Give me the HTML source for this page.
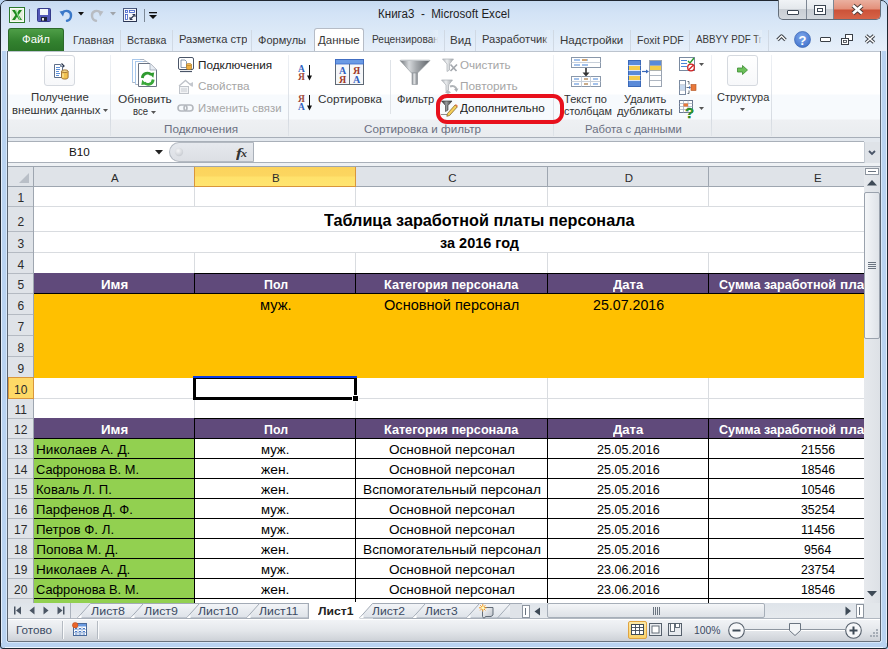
<!DOCTYPE html>
<html><head><meta charset="utf-8"><style>
*{margin:0;padding:0;box-sizing:border-box}
html,body{width:888px;height:649px;overflow:hidden;background:#b9d3f1}
body{position:relative;font-family:"Liberation Sans",sans-serif;font-size:12px;color:#222}
.a{position:absolute}
.t{position:absolute;white-space:pre;line-height:1;transform-origin:0 0}
svg{position:absolute;overflow:visible}
</style></head><body>
<div class="a" style="left:0px;top:0px;width:888px;height:649px;background:#b9d3f1;border-radius:7px 7px 3px 3px;border:1px solid #1f2630"></div>
<div class="a" style="left:1px;top:1px;width:886px;height:50px;background:linear-gradient(#c6daf1 0,#d3e3f6 12px,#dae8f7 27px,#e8f0fa 51px);border-radius:6px 6px 0 0"></div>
<div class="a" style="left:1px;top:51px;width:1px;height:592px;background:#e4eefa"></div>
<div class="a" style="left:6px;top:51px;width:1px;height:591px;background:#d6e7fa"></div>
<div class="a" style="left:881px;top:51px;width:1px;height:591px;background:#d6e7fa"></div>
<div class="a" style="left:5px;top:647px;width:878px;height:1px;background:#eef6fe"></div>
<div class="a" style="left:7px;top:642px;width:874px;height:1px;background:#d6e7fa"></div>
<div class="a" style="left:7px;top:51px;width:1px;height:590px;background:#5a6470"></div>
<div class="a" style="left:880px;top:51px;width:1px;height:590px;background:#5a6470"></div>
<div class="a" style="left:886px;top:51px;width:1px;height:592px;background:#e4eefa"></div>
<svg style="left:9px;top:7px" width="16" height="16" viewBox="0 0 16 16"><rect x="0.5" y="0.5" width="15" height="15" fill="#e6f0dc" stroke="#2c7a2c"/><rect x="1.5" y="1.5" width="13" height="13" fill="none" stroke="#fff" stroke-width="0.8"/><path d="M3 3h3l2 3.3L10 3h3L9.6 8 13 13h-3L8 9.7 6 13H3l3.4-5z" fill="#1f8a1f"/><path d="M6.8 3.2L11 12.8" stroke="#8fe08f" stroke-width="1.2"/></svg>
<div class="a" style="left:29px;top:9px;width:1px;height:13px;background:#7c8896"></div>
<svg style="left:37px;top:8px" width="14" height="14" viewBox="0 0 14 14"><rect x="0.5" y="0.5" width="13" height="13" rx="1" fill="#5358b8" stroke="#343a8a"/><rect x="3" y="1" width="8" height="6" fill="#f4f6fa"/><rect x="4" y="9" width="6" height="4" fill="#20243a"/><rect x="5" y="10" width="2" height="2.5" fill="#e8e8e8"/></svg>
<svg style="left:59px;top:8px" width="14" height="14" viewBox="0 0 14 14"><path d="M3.5 4.5 C7 1.5 12.5 3 12 8 C11.7 11 9.5 12.5 8 12.8" fill="none" stroke="#3a78c8" stroke-width="2.4" stroke-linecap="round"/><path d="M0.5 3.5 L6 2.5 L4 8.5z" fill="#3a78c8"/></svg>
<svg style="left:78px;top:12px" width="6" height="4" viewBox="0 0 6 4"><path d="M0 0h6L3 3.5z" fill="#111"/></svg>
<svg style="left:90px;top:8px" width="14" height="14" viewBox="0 0 14 14"><path d="M10.5 4.5 C7 1.5 1.5 3 2 8 C2.3 11 4.5 12.5 6 12.8" fill="none" stroke="#b8bcc2" stroke-width="2.4" stroke-linecap="round"/><path d="M13.5 3.5 L8 2.5 L10 8.5z" fill="#b8bcc2"/></svg>
<svg style="left:110px;top:12px" width="6" height="4" viewBox="0 0 6 4"><path d="M0 0h6L3 3.5z" fill="#a0a4aa"/></svg>
<svg style="left:123px;top:8px" width="14" height="14" viewBox="0 0 14 14"><rect x="0.5" y="0.5" width="13" height="13" fill="#f4f6fa" stroke="#4a5a80"/><path d="M0.5 13.5h13v-13" fill="none" stroke="#2a3450"/><rect x="2.5" y="2.5" width="2" height="2" fill="#fff" stroke="#3a5ac8" stroke-width="0.8"/><rect x="6.5" y="2.5" width="5" height="2" fill="#fff" stroke="#3a5ac8" stroke-width="0.8"/><rect x="2.5" y="6.5" width="2" height="5" fill="#fff" stroke="#3a5ac8" stroke-width="0.8"/><path d="M7 11.5l4.5-4.5" stroke="#2a3450" stroke-width="1.1"/><path d="M9.5 6.5h2.5v2.5M7 9v2.5h2.5" fill="none" stroke="#2a3450" stroke-width="1"/></svg>
<div class="a" style="left:144px;top:9px;width:1px;height:13px;background:#7c8896"></div>
<svg style="left:149px;top:12px" width="8" height="7" viewBox="0 0 8 7"><rect x="0" y="0" width="8" height="1.3" fill="#111"/><path d="M0 3h8L4 7z" fill="#111"/></svg>
<div class="t" style="left:378.00px;top:8.44px;font-size:12px;font-weight:normal;font-style:normal;color:#1e1e1e;font-family:'Liberation Sans';transform:scaleX(0.9651);">Книга3  -  Microsoft Excel</div>
<div class="a" style="left:778px;top:0;width:103px;height:20px;border:1px solid #646e7a;border-top:none;border-radius:0 0 5px 5px;overflow:hidden;background:linear-gradient(#f0f3f6 0,#e4e8ec 45%,#c9ced4 50%,#d3d8dd 100%)"><div class="a" style="left:27px;top:0;width:1px;height:20px;background:#7d8794"></div><div class="a" style="left:54px;top:0;width:1px;height:20px;background:#7d8794"></div><div class="a" style="left:55px;top:0;width:48px;height:20px;background:linear-gradient(#eab0a0 0,#e3907a 45%,#cc5238 50%,#d8664a 100%)"></div></div>
<div class="a" style="left:787px;top:10px;width:12px;height:5px;background:#fff;border:1px solid #3c4652;border-radius:1px"></div>
<div class="a" style="left:814px;top:5px;width:12px;height:10px;border:1px solid #3c4652;background:#fff;box-shadow:inset 0 0 0 2px #fff, inset 0 0 0 3px #3c4652"></div>
<svg style="left:851px;top:4px" width="13" height="11" viewBox="0 0 13 11"><path d="M2 1.5 L11 9.5 M11 1.5 L2 9.5" stroke="#4a3a36" stroke-width="4.4"/><path d="M2 1.5 L11 9.5 M11 1.5 L2 9.5" stroke="#fff" stroke-width="2.6"/></svg>
<div class="a" style="left:8px;top:28px;width:56px;height:23px;border-radius:3px 3px 0 0;background:linear-gradient(#4e9e47,#33822f 55%,#2b7528);border:1px solid #2d6a2b;border-bottom:none"></div>
<div class="t" style="left:22.00px;top:34.27px;font-size:11.5px;font-weight:normal;font-style:normal;color:#fff;font-family:'Liberation Sans';transform:scaleX(0.9901);">Файл</div>
<div class="a" style="left:314px;top:28px;width:50px;height:24px;border:1px solid #b6bcc6;border-bottom:none;border-radius:3px 3px 0 0;background:linear-gradient(#fff,#fdfeff)"></div>
<div class="t" style="left:72.50px;top:34.67px;font-size:11.5px;font-weight:normal;font-style:normal;color:#383838;font-family:'Liberation Sans';transform:scaleX(0.9365);">Главная</div>
<div class="t" style="left:126.70px;top:34.67px;font-size:11.5px;font-weight:normal;font-style:normal;color:#383838;font-family:'Liberation Sans';transform:scaleX(0.9216);">Вставка</div>
<div class="a" style="left:178.8px;top:30px;width:68.19999999999999px;height:20px;overflow:hidden">
<div class="t" style="left:0.00px;top:4.27px;font-size:11.5px;font-weight:normal;font-style:normal;color:#383838;font-family:'Liberation Sans';transform:scaleX(0.973)">Разметка страницы</div>
</div>
<div class="t" style="left:258.00px;top:34.67px;font-size:11.5px;font-weight:normal;font-style:normal;color:#383838;font-family:'Liberation Sans';transform:scaleX(0.9591);">Формулы</div>
<div class="t" style="left:318.00px;top:34.67px;font-size:11.5px;font-weight:normal;font-style:normal;color:#383838;font-family:'Liberation Sans';">Данные</div>
<div class="a" style="left:372px;top:30px;width:66px;height:20px;overflow:hidden">
<div class="t" style="left:0.00px;top:4.27px;font-size:11.5px;font-weight:normal;font-style:normal;color:#383838;font-family:'Liberation Sans';transform:scaleX(0.88)">Рецензирование</div>
<div class="a" style="left:59px;top:0;width:7px;height:20px;background:linear-gradient(90deg,rgba(228,238,249,0),#e4eef9)"></div>
</div>
<div class="t" style="left:450.00px;top:34.67px;font-size:11.5px;font-weight:normal;font-style:normal;color:#383838;font-family:'Liberation Sans';transform:scaleX(1.0090);">Вид</div>
<div class="a" style="left:482px;top:30px;width:68px;height:20px;overflow:hidden">
<div class="t" style="left:0.00px;top:4.27px;font-size:11.5px;font-weight:normal;font-style:normal;color:#383838;font-family:'Liberation Sans';transform:scaleX(0.97)">Разработчик</div>
<div class="a" style="left:61px;top:0;width:7px;height:20px;background:linear-gradient(90deg,rgba(228,238,249,0),#e4eef9)"></div>
</div>
<div class="t" style="left:560.40px;top:34.67px;font-size:11.5px;font-weight:normal;font-style:normal;color:#383838;font-family:'Liberation Sans';transform:scaleX(1.0030);">Надстройки</div>
<div class="t" style="left:636.60px;top:34.67px;font-size:11.5px;font-weight:normal;font-style:normal;color:#383838;font-family:'Liberation Sans';transform:scaleX(0.9154);">Foxit PDF</div>
<div class="a" style="left:696px;top:30px;width:66px;height:20px;overflow:hidden">
<div class="t" style="left:0.00px;top:4.27px;font-size:11.5px;font-weight:normal;font-style:normal;color:#383838;font-family:'Liberation Sans';transform:scaleX(0.85)">ABBYY PDF Transformer</div>
<div class="a" style="left:59px;top:0;width:7px;height:20px;background:linear-gradient(90deg,rgba(228,238,249,0),#e4eef9)"></div>
</div>
<div class="a" style="left:120px;top:30px;width:1px;height:21px;background:#d0d9e4"></div>
<div class="a" style="left:172px;top:30px;width:1px;height:21px;background:#d0d9e4"></div>
<div class="a" style="left:251px;top:30px;width:1px;height:21px;background:#d0d9e4"></div>
<div class="a" style="left:444px;top:30px;width:1px;height:21px;background:#d0d9e4"></div>
<div class="a" style="left:475px;top:30px;width:1px;height:21px;background:#d0d9e4"></div>
<div class="a" style="left:553px;top:30px;width:1px;height:21px;background:#d0d9e4"></div>
<div class="a" style="left:630px;top:30px;width:1px;height:21px;background:#d0d9e4"></div>
<div class="a" style="left:689px;top:30px;width:1px;height:21px;background:#d0d9e4"></div>
<div class="a" style="left:768px;top:30px;width:1px;height:21px;background:#d0d9e4"></div>
<svg style="left:776px;top:34px" width="11" height="8" viewBox="0 0 11 8"><path d="M1.5 6 L5.5 2 L9.5 6" fill="none" stroke="#3a3f46" stroke-width="3.4" stroke-linejoin="round"/><path d="M1.5 6 L5.5 2 L9.5 6" fill="none" stroke="#fff" stroke-width="1.4" stroke-linejoin="round"/></svg>
<svg style="left:794px;top:31px" width="17" height="17" viewBox="0 0 17 17"><defs><radialGradient id="hg" cx="0.45" cy="0.35" r="0.75"><stop offset="0" stop-color="#7fa8ec"/><stop offset="1" stop-color="#3a6cc8"/></radialGradient></defs><circle cx="8.5" cy="8.5" r="8" fill="url(#hg)" stroke="#3a64b0" stroke-width="0.7"/><text x="8.5" y="13.5" text-anchor="middle" font-family="Liberation Sans" font-weight="bold" font-size="13" fill="#fff">?</text></svg>
<div class="a" style="left:820px;top:37px;width:11px;height:5px;border:1px solid #3a3f46;background:#fff;border-radius:1px"></div>
<svg style="left:841px;top:34px" width="12" height="11" viewBox="0 0 12 11"><rect x="4.5" y="0.5" width="7" height="6" fill="#fff" stroke="#3a3f46" stroke-width="1"/><rect x="5.5" y="1.5" width="5" height="2" fill="none" stroke="#fff"/><rect x="0.5" y="4.5" width="7" height="6" fill="#fff" stroke="#3a3f46" stroke-width="1"/><rect x="2.5" y="6.5" width="3" height="2" fill="none" stroke="#3a3f46" stroke-width="0.8"/></svg>
<svg style="left:864px;top:34px" width="12" height="10" viewBox="0 0 12 10"><path d="M2 1.5 L10 8.5 M10 1.5 L2 8.5" stroke="#3a3f46" stroke-width="3.6"/><path d="M2 1.5 L10 8.5 M10 1.5 L2 8.5" stroke="#fff" stroke-width="1.6"/></svg>
<div class="a" style="left:8px;top:51px;width:872px;height:87px;background:linear-gradient(#fff 0,#fff 42px,#f7fafd 43px,#f7fafd 67px,#eef0f3 68px,#e9ecef 86px);border-top:1px solid #bcc4ce;border-bottom:1px solid #a7aeb8"></div>
<div class="a" style="left:110px;top:55px;width:1px;height:81px;background:linear-gradient(#eef1f5,#d6dbe2 80%,#dfe3e8)"></div>
<div class="a" style="left:288px;top:55px;width:1px;height:81px;background:linear-gradient(#eef1f5,#d6dbe2 80%,#dfe3e8)"></div>
<div class="a" style="left:553px;top:55px;width:1px;height:81px;background:linear-gradient(#eef1f5,#d6dbe2 80%,#dfe3e8)"></div>
<div class="a" style="left:711px;top:55px;width:1px;height:81px;background:linear-gradient(#eef1f5,#d6dbe2 80%,#dfe3e8)"></div>
<div class="a" style="left:771px;top:55px;width:1px;height:81px;background:linear-gradient(#eef1f5,#d6dbe2 80%,#dfe3e8)"></div>
<div class="t" style="left:163.50px;top:123.69px;font-size:11px;font-weight:normal;font-style:normal;color:#6b7082;font-family:'Liberation Sans';transform:scaleX(1.0633);">Подключения</div>
<div class="t" style="left:364.00px;top:123.69px;font-size:11px;font-weight:normal;font-style:normal;color:#6b7082;font-family:'Liberation Sans';transform:scaleX(1.0609);">Сортировка и фильтр</div>
<div class="t" style="left:585.40px;top:123.69px;font-size:11px;font-weight:normal;font-style:normal;color:#6b7082;font-family:'Liberation Sans';transform:scaleX(1.0274);">Работа с данными</div>
<div class="a" style="left:44px;top:55px;width:31px;height:31px;border:1px solid #d5d9df;border-radius:3px;background:linear-gradient(#fff,#f7f8fa)"></div>
<svg style="left:53px;top:63px" width="16" height="17" viewBox="0 0 16 17"><path d="M1.5 1.5h6l2 2v11h-8z" fill="#fff" stroke="#5e6e88"/><path d="M7.5 1.5v2h2" fill="#dfe6f0" stroke="#5e6e88" stroke-width="0.8"/><path d="M8.5 0.5l2.5 2.5-1 1" fill="none" stroke="#26324a" stroke-width="1.2"/><path d="M3 4.5h4M3 6.5h4M3 8.5h3M3 10.5h4M3 12.5h3" stroke="#5b8fd8" stroke-width="1"/><path d="M8.5 8.2v6.3c0 .9 1.5 1.6 3.3 1.6s3.3-.7 3.3-1.6V8.2" fill="#f2c250" stroke="#9a6a2a" stroke-width="0.9"/><ellipse cx="11.8" cy="8.2" rx="3.3" ry="1.3" fill="#f8dc8a" stroke="#9a6a2a" stroke-width="0.9"/><path d="M10 10.5v4" stroke="#fbe9a8" stroke-width="1.2"/></svg>
<div class="t" style="left:30.65px;top:92.27px;font-size:11.5px;font-weight:normal;font-style:normal;color:#333;font-family:'Liberation Sans';transform:scaleX(0.9874);">Получение</div>
<div class="t" style="left:11.70px;top:104.77px;font-size:11.5px;font-weight:normal;font-style:normal;color:#333;font-family:'Liberation Sans';transform:scaleX(0.9852);">внешних данных</div>
<svg style="left:103px;top:109px" width="5" height="3" viewBox="0 0 5 3"><path d="M0 0h5L2.5 3z" fill="#555"/></svg>
<svg style="left:131px;top:58px" width="28" height="30" viewBox="0 0 28 30"><path d="M1.5 1.5H13l3 3V24.5H1.5z" fill="#fff" stroke="#aab4c2"/><path d="M1.5 24V1.5H9" fill="none" stroke="#a8c8ec"/><path d="M4.5 3.5H16l3 3V26.5H4.5z" fill="#fff" stroke="#aab4c2"/><path d="M4.5 26V3.5H12" fill="none" stroke="#a8c8ec"/><path d="M7.5 5.5H19l6.5 6.5V28.5H7.5z" fill="#fff" stroke="#6a7484"/><path d="M19 5.5V12h6.5" fill="#e8edf4" stroke="#9aa4b2" stroke-width="0.8"/><path d="M11.3 20 C11.8 15 17.5 13.5 20.3 17" fill="none" stroke="#2f9a2f" stroke-width="2.8"/><path d="M18 15.3 L23.2 14.6 L22.3 19.8z" fill="#2f9a2f"/><path d="M22.2 21.5 C21.7 26.5 16 28 13.2 24.5" fill="none" stroke="#3aa83a" stroke-width="2.8"/><path d="M15.5 26.2 L10.3 26.9 L11.2 21.7z" fill="#3aa83a"/></svg>
<div class="t" style="left:118.10px;top:93.77px;font-size:11.5px;font-weight:normal;font-style:normal;color:#333;font-family:'Liberation Sans';transform:scaleX(1.0331);">Обновить</div>
<div class="t" style="left:133.00px;top:106.27px;font-size:11.5px;font-weight:normal;font-style:normal;color:#333;font-family:'Liberation Sans';transform:scaleX(0.8269);">все</div>
<svg style="left:151px;top:110.5px" width="5" height="3" viewBox="0 0 5 3"><path d="M0 0h5L2.5 3z" fill="#555"/></svg>
<svg style="left:178px;top:57px" width="17" height="16" viewBox="0 0 17 16"><rect x="0.5" y="0.5" width="15" height="12" rx="1.5" fill="#fff" stroke="#4a5568"/><path d="M2 14.5h12" stroke="#4a5568" stroke-width="1.2"/><path d="M3 3h4l1.5 1.5v6h-5.5z" fill="#fff" stroke="#6a7d99" stroke-width="0.8"/><path d="M8.5 7.5v4c0 .6 1.2 1 2.5 1s2.5-.4 2.5-1v-4" fill="#f0b040" stroke="#b07a20" stroke-width="0.7"/><ellipse cx="11" cy="7.5" rx="2.5" ry="1" fill="#f5c46a" stroke="#b07a20" stroke-width="0.7"/></svg>
<div class="t" style="left:197.50px;top:59.57px;font-size:11.5px;font-weight:normal;font-style:normal;color:#222;font-family:'Liberation Sans';transform:scaleX(1.0183);">Подключения</div>
<svg style="left:178px;top:79px" width="17" height="16" viewBox="0 0 17 16"><path d="M1 7l6.5-5.5L14 7" fill="none" stroke="#c0c4ca" stroke-width="1.4"/><rect x="1.5" y="7.5" width="9" height="7" fill="#f2f3f5" stroke="#c0c4ca"/><path d="M3 10h6M3 12h6" stroke="#c8ccd2"/><path d="M11 5l4-2v5z" fill="#c4c8ce"/></svg>
<div class="t" style="left:197.50px;top:81.37px;font-size:11.5px;font-weight:normal;font-style:normal;color:#a6a6a6;font-family:'Liberation Sans';transform:scaleX(1.0198);">Свойства</div>
<svg style="left:177px;top:102px" width="18" height="12" viewBox="0 0 18 12"><rect x="1" y="3" width="9" height="6" rx="3" fill="none" stroke="#b4b8be" stroke-width="1.6"/><rect x="7" y="3" width="9" height="6" rx="3" fill="none" stroke="#b4b8be" stroke-width="1.6"/></svg>
<div class="t" style="left:197.50px;top:102.97px;font-size:11.5px;font-weight:normal;font-style:normal;color:#a6a6a6;font-family:'Liberation Sans';transform:scaleX(0.9854);">Изменить связи</div>
<svg style="left:297px;top:64px" width="16" height="18" viewBox="0 0 16 18"><text x="4.5" y="8" text-anchor="middle" font-family="Liberation Serif" font-weight="bold" font-size="9.5" fill="#2f5fc0">A</text><text x="4.5" y="16" text-anchor="middle" font-family="Liberation Serif" font-weight="bold" font-size="9.5" fill="#a04a3a">Я</text><path d="M12.5 1v12" stroke="#111" stroke-width="1"/><path d="M10 11.5l2.5 5 2.5-5z" fill="#111"/></svg>
<svg style="left:297px;top:94px" width="16" height="18" viewBox="0 0 16 18"><text x="4.5" y="8" text-anchor="middle" font-family="Liberation Serif" font-weight="bold" font-size="9.5" fill="#a04a3a">Я</text><text x="4.5" y="16" text-anchor="middle" font-family="Liberation Serif" font-weight="bold" font-size="9.5" fill="#2f5fc0">A</text><path d="M12.5 1v12" stroke="#111" stroke-width="1"/><path d="M10 11.5l2.5 5 2.5-5z" fill="#111"/></svg>
<svg style="left:335px;top:59px" width="30" height="26" viewBox="0 0 30 26"><rect x="0.5" y="0.5" width="28" height="25" fill="#f6f7f9" stroke="#5e6874"/><rect x="0.5" y="0.5" width="28" height="4.5" fill="#6a9ae4" stroke="#3a6ac8" stroke-width="0.8"/><path d="M14.5 5v20.5" stroke="#5e6874"/><text x="7.5" y="14.5" text-anchor="middle" font-family="Liberation Serif" font-weight="bold" font-size="10" fill="#2f5fc0">A</text><text x="7.5" y="23.5" text-anchor="middle" font-family="Liberation Serif" font-weight="bold" font-size="10" fill="#a03a2a">Я</text><text x="21.5" y="14.5" text-anchor="middle" font-family="Liberation Serif" font-weight="bold" font-size="10" fill="#a03a2a">Я</text><text x="21.5" y="23.5" text-anchor="middle" font-family="Liberation Serif" font-weight="bold" font-size="10" fill="#2f5fc0">A</text></svg>
<div class="t" style="left:318.30px;top:93.77px;font-size:11.5px;font-weight:normal;font-style:normal;color:#333;font-family:'Liberation Sans';transform:scaleX(1.0139);">Сортировка</div>
<div class="a" style="left:390px;top:60px;width:1px;height:54px;background:#dfe3e8"></div>
<svg style="left:399px;top:59px" width="32" height="27" viewBox="0 0 32 27"><defs><linearGradient id="fg" x1="0" x2="1"><stop offset="0" stop-color="#6e7378"/><stop offset="0.3" stop-color="#d6d9dc"/><stop offset="0.55" stop-color="#a4a8ac"/><stop offset="1" stop-color="#5e6368"/></linearGradient><linearGradient id="fg2" x1="0" x2="1"><stop offset="0" stop-color="#8a8f94"/><stop offset="0.4" stop-color="#e4e6e8"/><stop offset="1" stop-color="#7a7f84"/></linearGradient></defs><path d="M1 1.5h30L18.5 14h-6z" fill="url(#fg)" stroke="#8a9096" stroke-width="0.6"/><rect x="13" y="14" width="5.5" height="11.5" fill="url(#fg2)" stroke="#8a9096" stroke-width="0.6"/><path d="M1.5 1.2h29" stroke="#c8ccd0" stroke-width="1.2"/></svg>
<div class="t" style="left:397.00px;top:93.77px;font-size:11.5px;font-weight:normal;font-style:normal;color:#333;font-family:'Liberation Sans';transform:scaleX(0.9627);">Фильтр</div>
<svg style="left:442px;top:58px" width="16" height="14" viewBox="0 0 16 14"><defs><linearGradient id="dg" x1="0" x2="1"><stop offset="0" stop-color="#b4b8bc"/><stop offset="0.4" stop-color="#eceef0"/><stop offset="1" stop-color="#a0a4a8"/></linearGradient></defs><path d="M0.5 1h11L7.5 6v6l-2.5 1.5V6z" fill="url(#dg)" stroke="#a8acb2" stroke-width="0.7"/><path d="M8.5 6.5l6 6.5M15 6.5L8.5 13" stroke="#a4a8ae" stroke-width="1.7"/></svg>
<div class="t" style="left:460.00px;top:59.77px;font-size:11.5px;font-weight:normal;font-style:normal;color:#a6a6a6;font-family:'Liberation Sans';transform:scaleX(1.0107);">Очистить</div>
<svg style="left:441px;top:79px" width="18" height="15" viewBox="0 0 18 15"><path d="M0.5 1h11L7.5 6v5l-2.5 1.5V6z" fill="url(#dg)" stroke="#a8acb2" stroke-width="0.7"/><path d="M9 7.5c3-1.5 6 0 6.5 3" fill="none" stroke="#b0b4b8" stroke-width="2"/><path d="M17.5 9.5l-2 3.5-2.5-3z" fill="#a8acb2"/><path d="M4 13.5l3-2.5 3 2.5-3 1.5z" fill="#b4b8bc"/></svg>
<div class="t" style="left:460.00px;top:81.27px;font-size:11.5px;font-weight:normal;font-style:normal;color:#a6a6a6;font-family:'Liberation Sans';transform:scaleX(1.0296);">Повторить</div>
<svg style="left:441px;top:100px" width="17" height="17" viewBox="0 0 17 17"><defs><linearGradient id="fg3" x1="0" x2="1"><stop offset="0" stop-color="#222"/><stop offset="0.45" stop-color="#9a9ea2"/><stop offset="1" stop-color="#333"/></linearGradient></defs><path d="M0.5 1h10.5L7 5.5V10l-2.5 1.5V5.5z" fill="url(#fg3)" stroke="#333" stroke-width="0.6"/><path d="M6.5 13.5L14 5l2.2 2-7.6 8.5-2.8.8z" fill="#f4cf5a" stroke="#7a5a20" stroke-width="0.7"/><path d="M14 5l2.2 2 .8-.9-2.2-2z" fill="#e87a4a"/><path d="M0.5 14.5h1M2.5 14.5h1M4.5 14.5h1" stroke="#222" stroke-width="1"/></svg>
<div class="t" style="left:460.00px;top:102.97px;font-size:11.5px;font-weight:normal;font-style:normal;color:#222;font-family:'Liberation Sans';transform:scaleX(1.0244);">Дополнительно</div>
<svg style="left:570px;top:57px" width="32" height="30" viewBox="0 0 32 30"><rect x="1.5" y="0.5" width="29" height="10" fill="#fff" stroke="#8a98aa"/><path d="M1.5 5.5h29" stroke="#c8d0da"/><path d="M4 3h6M12 3h6M4 8h6M12 8h6" stroke="#4a86d8" stroke-width="1.2"/><path d="M12 3h5" stroke="#f0962a" stroke-width="1.2"/><path d="M16 11v6" stroke="#333" stroke-width="1.6"/><path d="M12.5 15.5l3.5 4 3.5-4z" fill="#333"/><rect x="1.5" y="19.5" width="29" height="10" fill="#fff" stroke="#8a98aa"/><path d="M11.5 19.5v10M20.5 19.5v10M1.5 24.5h29" stroke="#c8d0da"/><path d="M4 22h5M14 22h4M23 22h5M4 27h5M14 27h4M23 27h5" stroke="#4a86d8" stroke-width="1.2"/><path d="M14 22h4M14 27h4" stroke="#f0962a" stroke-width="1.2"/></svg>
<div class="t" style="left:564.40px;top:93.77px;font-size:11.5px;font-weight:normal;font-style:normal;color:#333;font-family:'Liberation Sans';transform:scaleX(0.9602);">Текст по</div>
<div class="t" style="left:563.50px;top:106.27px;font-size:11.5px;font-weight:normal;font-style:normal;color:#333;font-family:'Liberation Sans';transform:scaleX(0.9372);">столбцам</div>
<svg style="left:628px;top:60px" width="34" height="27" viewBox="0 0 34 27"><rect x="0.5" y="0.5" width="12" height="26" fill="#5a8ad8" stroke="#3a68b8"/><path d="M0.5 5.5h12M0.5 10.5h12M0.5 15.5h12M0.5 20.5h12" stroke="#fff" stroke-width="0.8"/><rect x="1" y="6" width="11" height="4" fill="#f4cc4a"/><rect x="1" y="16" width="11" height="4" fill="#f4cc4a"/><path d="M14 11.5h5" stroke="#3a68b8" stroke-width="1.2"/><path d="M18 9.5l3 2-3 2z" fill="#3a68b8"/><rect x="21.5" y="0.5" width="12" height="26" fill="#fff" stroke="#9aa4b2"/><rect x="22" y="1" width="11" height="4.5" fill="#5a8ad8"/><rect x="22" y="6" width="11" height="4.5" fill="#f4cc4a"/><path d="M21.5 5.5h12M21.5 10.5h12M21.5 15.5h12M21.5 20.5h12" stroke="#9aa4b2" stroke-width="0.8"/></svg>
<div class="t" style="left:623.80px;top:93.77px;font-size:11.5px;font-weight:normal;font-style:normal;color:#333;font-family:'Liberation Sans';transform:scaleX(0.9611);">Удалить</div>
<div class="t" style="left:617.00px;top:106.27px;font-size:11.5px;font-weight:normal;font-style:normal;color:#333;font-family:'Liberation Sans';transform:scaleX(0.9795);">дубликаты</div>
<svg style="left:679px;top:57px" width="17" height="15" viewBox="0 0 17 15"><rect x="0.5" y="0.5" width="15" height="13" fill="#fff" stroke="#7a8aa0"/><path d="M2 3.5h6M2 6.5h6M2 9.5h6" stroke="#4a86d8" stroke-width="1.1"/><path d="M9 4l2 2 4-5" fill="none" stroke="#2a9a2a" stroke-width="1.4"/><circle cx="12" cy="10.5" r="3.3" fill="#fff" stroke="#d02020" stroke-width="1.3"/><path d="M10 12.5l4-4" stroke="#d02020" stroke-width="1.2"/></svg>
<svg style="left:699px;top:63px" width="5" height="3" viewBox="0 0 5 3"><path d="M0 0h5L2.5 3z" fill="#555"/></svg>
<svg style="left:679px;top:80px" width="17" height="15" viewBox="0 0 17 15"><rect x="0.5" y="0.5" width="6" height="14" fill="#fff" stroke="#7a8aa0"/><path d="M0.5 5h6M0.5 10h6" stroke="#9aaac0"/><rect x="1" y="5.5" width="5" height="4" fill="#c8daf0"/><path d="M8.5 1.5h1.5v3M8.5 13.5h1.5v-3M7.5 7.5h3" stroke="#56606c" stroke-width="0.9" fill="none"/><path d="M10 6l2 1.5-2 1.5z" fill="#3a6ab8"/><rect x="12" y="4.5" width="5" height="6" fill="#e8783a" stroke="#b05020" stroke-width="0.6"/></svg>
<svg style="left:679px;top:100px" width="17" height="18" viewBox="0 0 17 18"><rect x="0.5" y="0.5" width="13" height="12" fill="#fff" stroke="#6a7890"/><path d="M0.5 3.5h13M0.5 6.5h13M0.5 9.5h13M4.5 0.5v12M9 0.5v12" stroke="#a8b4c4" stroke-width="0.8"/><rect x="4.5" y="3.5" width="4.5" height="3" fill="#e8783a"/><text x="6" y="17.5" font-family="Liberation Sans" font-weight="bold" font-size="15" fill="#2a9a2a" stroke="#1a6a1a" stroke-width="0.3">?</text></svg>
<svg style="left:699px;top:107px" width="5" height="3" viewBox="0 0 5 3"><path d="M0 0h5L2.5 3z" fill="#555"/></svg>
<div class="a" style="left:727px;top:55px;width:31px;height:31px;border:1px solid #d5d9df;border-radius:3px;background:linear-gradient(#fff,#f7f8fa)"></div>
<svg style="left:737px;top:65px" width="11" height="10" viewBox="0 0 11 10"><path d="M0.5 3h5V0.5l5 4.5-5 4.5V7h-5z" fill="#6cc05a" stroke="#3a8a30" stroke-width="0.8"/></svg>
<div class="t" style="left:716.50px;top:91.77px;font-size:11.5px;font-weight:normal;font-style:normal;color:#333;font-family:'Liberation Sans';transform:scaleX(0.9604);">Структура</div>
<svg style="left:740px;top:108px" width="5" height="3" viewBox="0 0 5 3"><path d="M0 0h5L2.5 3z" fill="#555"/></svg>
<div class="a" style="left:435.5px;top:94px;width:128.5px;height:29.7px;border:4.6px solid #e8101c;border-radius:11px"></div>
<div class="a" style="left:8px;top:138px;width:872px;height:28px;background:#e3e8ee"></div>
<div class="a" style="left:8px;top:141px;width:856px;height:22px;background:#fff;border-top:1px solid #a9b0b9;border-bottom:1px solid #a9b0b9"></div>
<div class="a" style="left:8px;top:163px;width:872px;height:3px;background:#eef1f4"></div>
<div class="a" style="left:8px;top:166px;width:872px;height:1px;background:#9da5af"></div>
<div class="t" style="left:68.50px;top:147.27px;font-size:11.5px;font-weight:normal;font-style:normal;color:#111;font-family:'Liberation Sans';transform:scaleX(1.0162);">B10</div>
<svg style="left:155px;top:150px" width="8" height="5" viewBox="0 0 8 5"><path d="M0 0h8L4 4.5z" fill="#222"/></svg>
<div class="a" style="left:169px;top:142px;width:85px;height:20px;background:linear-gradient(#e6e9ee,#dcdfe4);border:1px solid #b4bac2;border-right:1px solid #a9b0b9;border-radius:10px 0 0 10px"></div>
<svg style="left:173px;top:145px" width="13" height="13" viewBox="0 0 13 13"><defs><radialGradient id="cg" cx="0.4" cy="0.35" r="0.7"><stop offset="0" stop-color="#f4f5f7"/><stop offset="1" stop-color="#c6cad0"/></radialGradient></defs><circle cx="6" cy="7" r="4.2" fill="url(#cg)"/></svg>
<div class="t" style="left:235.50px;top:146.92px;font-size:12.5px;font-weight:bold;font-style:italic;color:#333;font-family:'Liberation Serif';transform:scaleX(1.4382);">f</div>
<div class="t" style="left:240.80px;top:149.96px;font-size:9.5px;font-weight:bold;font-style:italic;color:#333;font-family:'Liberation Serif';transform:scaleX(1.2632);">x</div>
<div class="a" style="left:864px;top:142px;width:16px;height:21px;background:#dfe3e8;border-left:1px solid #c5cbd3"></div>
<svg style="left:868px;top:150px" width="8" height="6" viewBox="0 0 8 6"><path d="M1 1l3 3 3-3" fill="none" stroke="#4a5568" stroke-width="1.8"/></svg>
<div class="a" style="left:8px;top:167px;width:856px;height:436px;overflow:hidden;background:#fff">
<div class="a" style="left:0px;top:0px;width:856px;height:19px;background:#dfe3e8"></div>
<div class="a" style="left:0px;top:19px;width:856px;height:1px;background:#9ea6b0"></div>
<div class="a" style="left:0px;top:20px;width:25px;height:420px;background:#dfe3e8"></div>
<div class="a" style="left:25px;top:0px;width:1px;height:440px;background:#9ea6b0"></div>
<svg style="left:11px;top:6px" width="10" height="10" viewBox="0 0 10 10"><path d="M10 0V10H0z" fill="#b9bfc7"/></svg>
<div class="a" style="left:26px;top:39px;width:830px;height:1px;background:#d9dce0"></div>
<div class="a" style="left:0px;top:39px;width:25px;height:1px;background:#b4bac2"></div>
<div class="a" style="left:26px;top:64px;width:830px;height:1px;background:#d9dce0"></div>
<div class="a" style="left:0px;top:64px;width:25px;height:1px;background:#b4bac2"></div>
<div class="a" style="left:26px;top:85px;width:830px;height:1px;background:#d9dce0"></div>
<div class="a" style="left:0px;top:85px;width:25px;height:1px;background:#b4bac2"></div>
<div class="a" style="left:26px;top:106px;width:830px;height:1px;background:#d9dce0"></div>
<div class="a" style="left:0px;top:106px;width:25px;height:1px;background:#b4bac2"></div>
<div class="a" style="left:26px;top:126px;width:830px;height:1px;background:#d9dce0"></div>
<div class="a" style="left:0px;top:126px;width:25px;height:1px;background:#b4bac2"></div>
<div class="a" style="left:26px;top:147px;width:830px;height:1px;background:#d9dce0"></div>
<div class="a" style="left:0px;top:147px;width:25px;height:1px;background:#b4bac2"></div>
<div class="a" style="left:26px;top:168px;width:830px;height:1px;background:#d9dce0"></div>
<div class="a" style="left:0px;top:168px;width:25px;height:1px;background:#b4bac2"></div>
<div class="a" style="left:26px;top:189px;width:830px;height:1px;background:#d9dce0"></div>
<div class="a" style="left:0px;top:189px;width:25px;height:1px;background:#b4bac2"></div>
<div class="a" style="left:26px;top:210px;width:830px;height:1px;background:#d9dce0"></div>
<div class="a" style="left:0px;top:210px;width:25px;height:1px;background:#b4bac2"></div>
<div class="a" style="left:26px;top:231px;width:830px;height:1px;background:#d9dce0"></div>
<div class="a" style="left:0px;top:231px;width:25px;height:1px;background:#b4bac2"></div>
<div class="a" style="left:26px;top:251px;width:830px;height:1px;background:#d9dce0"></div>
<div class="a" style="left:0px;top:251px;width:25px;height:1px;background:#b4bac2"></div>
<div class="a" style="left:26px;top:271px;width:830px;height:1px;background:#d9dce0"></div>
<div class="a" style="left:0px;top:271px;width:25px;height:1px;background:#b4bac2"></div>
<div class="a" style="left:26px;top:291px;width:830px;height:1px;background:#d9dce0"></div>
<div class="a" style="left:0px;top:291px;width:25px;height:1px;background:#b4bac2"></div>
<div class="a" style="left:26px;top:311px;width:830px;height:1px;background:#d9dce0"></div>
<div class="a" style="left:0px;top:311px;width:25px;height:1px;background:#b4bac2"></div>
<div class="a" style="left:26px;top:331px;width:830px;height:1px;background:#d9dce0"></div>
<div class="a" style="left:0px;top:331px;width:25px;height:1px;background:#b4bac2"></div>
<div class="a" style="left:26px;top:351px;width:830px;height:1px;background:#d9dce0"></div>
<div class="a" style="left:0px;top:351px;width:25px;height:1px;background:#b4bac2"></div>
<div class="a" style="left:26px;top:371px;width:830px;height:1px;background:#d9dce0"></div>
<div class="a" style="left:0px;top:371px;width:25px;height:1px;background:#b4bac2"></div>
<div class="a" style="left:26px;top:391px;width:830px;height:1px;background:#d9dce0"></div>
<div class="a" style="left:0px;top:391px;width:25px;height:1px;background:#b4bac2"></div>
<div class="a" style="left:26px;top:411px;width:830px;height:1px;background:#d9dce0"></div>
<div class="a" style="left:0px;top:411px;width:25px;height:1px;background:#b4bac2"></div>
<div class="a" style="left:26px;top:431px;width:830px;height:1px;background:#d9dce0"></div>
<div class="a" style="left:0px;top:431px;width:25px;height:1px;background:#b4bac2"></div>
<div class="a" style="left:0px;top:452px;width:25px;height:1px;background:#b4bac2"></div>
<div class="a" style="left:186px;top:20px;width:1px;height:420px;background:#d9dce0"></div>
<div class="a" style="left:186px;top:0px;width:1px;height:19px;background:#9ea6b0"></div>
<div class="a" style="left:347px;top:20px;width:1px;height:420px;background:#d9dce0"></div>
<div class="a" style="left:347px;top:0px;width:1px;height:19px;background:#9ea6b0"></div>
<div class="a" style="left:539px;top:20px;width:1px;height:420px;background:#d9dce0"></div>
<div class="a" style="left:539px;top:0px;width:1px;height:19px;background:#9ea6b0"></div>
<div class="a" style="left:700px;top:20px;width:1px;height:420px;background:#d9dce0"></div>
<div class="a" style="left:700px;top:0px;width:1px;height:19px;background:#9ea6b0"></div>
<div class="a" style="left:186px;top:-1px;width:162px;height:21px;background:linear-gradient(#fcd35c 0,#fcd660 45%,#ffe26c 55%,#ffe570);border:1px solid #d9963b"></div>
<div class="t" style="left:102.96px;top:5.87px;font-size:11.5px;font-weight:normal;font-style:normal;color:#2b2b2b;font-family:'Liberation Sans';">A</div>
<div class="t" style="left:263.96px;top:5.87px;font-size:11.5px;font-weight:normal;font-style:normal;color:#2b2b2b;font-family:'Liberation Sans';">B</div>
<div class="t" style="left:440.14px;top:5.87px;font-size:11.5px;font-weight:normal;font-style:normal;color:#2b2b2b;font-family:'Liberation Sans';">C</div>
<div class="t" style="left:616.64px;top:5.87px;font-size:11.5px;font-weight:normal;font-style:normal;color:#2b2b2b;font-family:'Liberation Sans';">D</div>
<div class="t" style="left:805.96px;top:5.87px;font-size:11.5px;font-weight:normal;font-style:normal;color:#2b2b2b;font-family:'Liberation Sans';">E</div>
<div class="t" style="left:9.46px;top:24.84px;font-size:12px;font-weight:normal;font-style:normal;color:#2b2b2b;font-family:'Liberation Sans';">1</div>
<div class="t" style="left:9.46px;top:48.64px;font-size:12px;font-weight:normal;font-style:normal;color:#2b2b2b;font-family:'Liberation Sans';">2</div>
<div class="t" style="left:9.46px;top:70.84px;font-size:12px;font-weight:normal;font-style:normal;color:#2b2b2b;font-family:'Liberation Sans';">3</div>
<div class="t" style="left:9.46px;top:91.84px;font-size:12px;font-weight:normal;font-style:normal;color:#2b2b2b;font-family:'Liberation Sans';">4</div>
<div class="t" style="left:9.46px;top:111.84px;font-size:12px;font-weight:normal;font-style:normal;color:#2b2b2b;font-family:'Liberation Sans';">5</div>
<div class="t" style="left:9.46px;top:132.84px;font-size:12px;font-weight:normal;font-style:normal;color:#2b2b2b;font-family:'Liberation Sans';">6</div>
<div class="t" style="left:9.46px;top:153.84px;font-size:12px;font-weight:normal;font-style:normal;color:#2b2b2b;font-family:'Liberation Sans';">7</div>
<div class="t" style="left:9.46px;top:174.84px;font-size:12px;font-weight:normal;font-style:normal;color:#2b2b2b;font-family:'Liberation Sans';">8</div>
<div class="t" style="left:9.46px;top:195.84px;font-size:12px;font-weight:normal;font-style:normal;color:#2b2b2b;font-family:'Liberation Sans';">9</div>
<div class="a" style="left:0px;top:210px;width:26px;height:22px;background:#fed966;border:1px solid #d9963b"></div>
<div class="t" style="left:6.12px;top:216.84px;font-size:12px;font-weight:normal;font-style:normal;color:#2b2b2b;font-family:'Liberation Sans';">10</div>
<div class="t" style="left:6.57px;top:236.84px;font-size:12px;font-weight:normal;font-style:normal;color:#2b2b2b;font-family:'Liberation Sans';">11</div>
<div class="t" style="left:6.12px;top:256.84px;font-size:12px;font-weight:normal;font-style:normal;color:#2b2b2b;font-family:'Liberation Sans';">12</div>
<div class="t" style="left:6.12px;top:276.84px;font-size:12px;font-weight:normal;font-style:normal;color:#2b2b2b;font-family:'Liberation Sans';">13</div>
<div class="t" style="left:6.12px;top:296.84px;font-size:12px;font-weight:normal;font-style:normal;color:#2b2b2b;font-family:'Liberation Sans';">14</div>
<div class="t" style="left:6.12px;top:316.84px;font-size:12px;font-weight:normal;font-style:normal;color:#2b2b2b;font-family:'Liberation Sans';">15</div>
<div class="t" style="left:6.12px;top:336.84px;font-size:12px;font-weight:normal;font-style:normal;color:#2b2b2b;font-family:'Liberation Sans';">16</div>
<div class="t" style="left:6.12px;top:356.84px;font-size:12px;font-weight:normal;font-style:normal;color:#2b2b2b;font-family:'Liberation Sans';">17</div>
<div class="t" style="left:6.12px;top:376.84px;font-size:12px;font-weight:normal;font-style:normal;color:#2b2b2b;font-family:'Liberation Sans';">18</div>
<div class="t" style="left:6.12px;top:396.84px;font-size:12px;font-weight:normal;font-style:normal;color:#2b2b2b;font-family:'Liberation Sans';">19</div>
<div class="t" style="left:6.12px;top:416.84px;font-size:12px;font-weight:normal;font-style:normal;color:#2b2b2b;font-family:'Liberation Sans';">20</div>
<div class="a" style="left:26px;top:40px;width:830px;height:24px;background:#fff"></div>
<div class="a" style="left:26px;top:65px;width:830px;height:20px;background:#fff"></div>
<div class="t" style="left:316.25px;top:45.41px;font-size:17px;font-weight:bold;font-style:normal;color:#000;font-family:'Liberation Sans';transform:scaleX(0.9532);">Таблица заработной платы персонала</div>
<div class="t" style="left:432.00px;top:69.15px;font-size:14px;font-weight:bold;font-style:normal;color:#000;font-family:'Liberation Sans';transform:scaleX(1.0342);">за 2016 год</div>
<div class="a" style="left:26px;top:106px;width:830px;height:20px;background:#604a7b"></div>
<div class="a" style="left:26px;top:126px;width:830px;height:1px;background:#000"></div>
<div class="a" style="left:186px;top:106px;width:670px;height:1px;background:#000"></div>
<div class="a" style="left:186px;top:106px;width:1px;height:21px;background:#000"></div>
<div class="a" style="left:347px;top:106px;width:1px;height:21px;background:#000"></div>
<div class="a" style="left:539px;top:106px;width:1px;height:21px;background:#000"></div>
<div class="a" style="left:700px;top:106px;width:1px;height:21px;background:#000"></div>
<div class="t" style="left:92.60px;top:111.00px;font-size:13px;font-weight:bold;font-style:normal;color:#fff;font-family:'Liberation Sans';transform:scaleX(1.0246);">Имя</div>
<div class="t" style="left:255.60px;top:111.00px;font-size:13px;font-weight:bold;font-style:normal;color:#fff;font-family:'Liberation Sans';transform:scaleX(0.9511);">Пол</div>
<div class="t" style="left:376.30px;top:111.00px;font-size:13px;font-weight:bold;font-style:normal;color:#fff;font-family:'Liberation Sans';transform:scaleX(0.9739);">Категория персонала</div>
<div class="t" style="left:605.05px;top:111.00px;font-size:13px;font-weight:bold;font-style:normal;color:#fff;font-family:'Liberation Sans';transform:scaleX(1.0069);">Дата</div>
<div class="t" style="left:710.60px;top:111.00px;font-size:13px;font-weight:bold;font-style:normal;color:#fff;font-family:'Liberation Sans';transform:scaleX(0.9682);">Сумма заработной</div>
<div class="t" style="left:831.80px;top:111.00px;font-size:13px;font-weight:bold;font-style:normal;color:#fff;font-family:'Liberation Sans';transform:scaleX(1.0413);">платы</div>
<div class="a" style="left:26px;top:127px;width:830px;height:84px;background:#ffc000"></div>
<div class="t" style="left:251.85px;top:130.73px;font-size:14.5px;font-weight:normal;font-style:normal;color:#000;font-family:'Liberation Sans';transform:scaleX(1.0134);">муж.</div>
<div class="t" style="left:375.75px;top:130.73px;font-size:14.5px;font-weight:normal;font-style:normal;color:#000;font-family:'Liberation Sans';transform:scaleX(1.0059);">Основной персонал</div>
<div class="t" style="left:584.65px;top:130.73px;font-size:14.5px;font-weight:normal;font-style:normal;color:#000;font-family:'Liberation Sans';transform:scaleX(0.9796);">25.07.2016</div>
<div class="a" style="left:26px;top:251px;width:830px;height:20px;background:#604a7b"></div>
<div class="a" style="left:26px;top:271px;width:830px;height:1px;background:#000"></div>
<div class="a" style="left:186px;top:251px;width:670px;height:1px;background:#000"></div>
<div class="a" style="left:186px;top:251px;width:1px;height:21px;background:#000"></div>
<div class="a" style="left:347px;top:251px;width:1px;height:21px;background:#000"></div>
<div class="a" style="left:539px;top:251px;width:1px;height:21px;background:#000"></div>
<div class="a" style="left:700px;top:251px;width:1px;height:21px;background:#000"></div>
<div class="t" style="left:92.60px;top:256.00px;font-size:13px;font-weight:bold;font-style:normal;color:#fff;font-family:'Liberation Sans';transform:scaleX(1.0246);">Имя</div>
<div class="t" style="left:255.60px;top:256.00px;font-size:13px;font-weight:bold;font-style:normal;color:#fff;font-family:'Liberation Sans';transform:scaleX(0.9511);">Пол</div>
<div class="t" style="left:376.30px;top:256.00px;font-size:13px;font-weight:bold;font-style:normal;color:#fff;font-family:'Liberation Sans';transform:scaleX(0.9739);">Категория персонала</div>
<div class="t" style="left:605.05px;top:256.00px;font-size:13px;font-weight:bold;font-style:normal;color:#fff;font-family:'Liberation Sans';transform:scaleX(1.0069);">Дата</div>
<div class="t" style="left:710.60px;top:256.00px;font-size:13px;font-weight:bold;font-style:normal;color:#fff;font-family:'Liberation Sans';transform:scaleX(0.9682);">Сумма заработной</div>
<div class="t" style="left:831.80px;top:256.00px;font-size:13px;font-weight:bold;font-style:normal;color:#fff;font-family:'Liberation Sans';transform:scaleX(1.0413);">платы</div>
<div class="a" style="left:26px;top:272px;width:160px;height:20px;background:#92d050"></div>
<div class="a" style="left:26px;top:291px;width:830px;height:1px;background:#000"></div>
<div class="a" style="left:186px;top:271px;width:1px;height:21px;background:#000"></div>
<div class="a" style="left:347px;top:271px;width:1px;height:21px;background:#000"></div>
<div class="a" style="left:539px;top:271px;width:1px;height:21px;background:#000"></div>
<div class="a" style="left:700px;top:271px;width:1px;height:21px;background:#000"></div>
<div class="t" style="left:28.20px;top:275.57px;font-size:13.5px;font-weight:normal;font-style:normal;color:#000;font-family:'Liberation Sans';transform:scaleX(1.0066);">Николаев А. Д.</div>
<div class="t" style="left:253.35px;top:275.57px;font-size:13.5px;font-weight:normal;font-style:normal;color:#000;font-family:'Liberation Sans';transform:scaleX(0.9717);">муж.</div>
<div class="t" style="left:380.50px;top:275.57px;font-size:13.5px;font-weight:normal;font-style:normal;color:#000;font-family:'Liberation Sans';transform:scaleX(1.0062);">Основной персонал</div>
<div class="t" style="left:588.85px;top:275.57px;font-size:13.5px;font-weight:normal;font-style:normal;color:#000;font-family:'Liberation Sans';transform:scaleX(0.9278);">25.05.2016</div>
<div class="t" style="left:792.50px;top:275.57px;font-size:13.5px;font-weight:normal;font-style:normal;color:#000;font-family:'Liberation Sans';transform:scaleX(0.9055);">21556</div>
<div class="a" style="left:26px;top:292px;width:160px;height:20px;background:#92d050"></div>
<div class="a" style="left:26px;top:311px;width:830px;height:1px;background:#000"></div>
<div class="a" style="left:186px;top:291px;width:1px;height:21px;background:#000"></div>
<div class="a" style="left:347px;top:291px;width:1px;height:21px;background:#000"></div>
<div class="a" style="left:539px;top:291px;width:1px;height:21px;background:#000"></div>
<div class="a" style="left:700px;top:291px;width:1px;height:21px;background:#000"></div>
<div class="t" style="left:28.20px;top:295.57px;font-size:13.5px;font-weight:normal;font-style:normal;color:#000;font-family:'Liberation Sans';transform:scaleX(0.9512);">Сафронова В. М.</div>
<div class="t" style="left:253.30px;top:295.57px;font-size:13.5px;font-weight:normal;font-style:normal;color:#000;font-family:'Liberation Sans';transform:scaleX(1.0234);">жен.</div>
<div class="t" style="left:380.50px;top:295.57px;font-size:13.5px;font-weight:normal;font-style:normal;color:#000;font-family:'Liberation Sans';transform:scaleX(1.0062);">Основной персонал</div>
<div class="t" style="left:588.85px;top:295.57px;font-size:13.5px;font-weight:normal;font-style:normal;color:#000;font-family:'Liberation Sans';transform:scaleX(0.9278);">25.05.2016</div>
<div class="t" style="left:792.50px;top:295.57px;font-size:13.5px;font-weight:normal;font-style:normal;color:#000;font-family:'Liberation Sans';transform:scaleX(0.9055);">18546</div>
<div class="a" style="left:26px;top:312px;width:160px;height:20px;background:#92d050"></div>
<div class="a" style="left:26px;top:331px;width:830px;height:1px;background:#000"></div>
<div class="a" style="left:186px;top:311px;width:1px;height:21px;background:#000"></div>
<div class="a" style="left:347px;top:311px;width:1px;height:21px;background:#000"></div>
<div class="a" style="left:539px;top:311px;width:1px;height:21px;background:#000"></div>
<div class="a" style="left:700px;top:311px;width:1px;height:21px;background:#000"></div>
<div class="t" style="left:28.20px;top:315.57px;font-size:13.5px;font-weight:normal;font-style:normal;color:#000;font-family:'Liberation Sans';transform:scaleX(0.9682);">Коваль Л. П.</div>
<div class="t" style="left:253.30px;top:315.57px;font-size:13.5px;font-weight:normal;font-style:normal;color:#000;font-family:'Liberation Sans';transform:scaleX(1.0234);">жен.</div>
<div class="t" style="left:354.50px;top:315.57px;font-size:13.5px;font-weight:normal;font-style:normal;color:#000;font-family:'Liberation Sans';transform:scaleX(1.0158);">Вспомогательный персонал</div>
<div class="t" style="left:588.85px;top:315.57px;font-size:13.5px;font-weight:normal;font-style:normal;color:#000;font-family:'Liberation Sans';transform:scaleX(0.9278);">25.05.2016</div>
<div class="t" style="left:792.50px;top:315.57px;font-size:13.5px;font-weight:normal;font-style:normal;color:#000;font-family:'Liberation Sans';transform:scaleX(0.9055);">10546</div>
<div class="a" style="left:26px;top:332px;width:160px;height:20px;background:#92d050"></div>
<div class="a" style="left:26px;top:351px;width:830px;height:1px;background:#000"></div>
<div class="a" style="left:186px;top:331px;width:1px;height:21px;background:#000"></div>
<div class="a" style="left:347px;top:331px;width:1px;height:21px;background:#000"></div>
<div class="a" style="left:539px;top:331px;width:1px;height:21px;background:#000"></div>
<div class="a" style="left:700px;top:331px;width:1px;height:21px;background:#000"></div>
<div class="t" style="left:28.20px;top:335.57px;font-size:13.5px;font-weight:normal;font-style:normal;color:#000;font-family:'Liberation Sans';transform:scaleX(0.9691);">Парфенов Д. Ф.</div>
<div class="t" style="left:253.35px;top:335.57px;font-size:13.5px;font-weight:normal;font-style:normal;color:#000;font-family:'Liberation Sans';transform:scaleX(0.9717);">муж.</div>
<div class="t" style="left:380.50px;top:335.57px;font-size:13.5px;font-weight:normal;font-style:normal;color:#000;font-family:'Liberation Sans';transform:scaleX(1.0062);">Основной персонал</div>
<div class="t" style="left:588.85px;top:335.57px;font-size:13.5px;font-weight:normal;font-style:normal;color:#000;font-family:'Liberation Sans';transform:scaleX(0.9278);">25.05.2016</div>
<div class="t" style="left:792.50px;top:335.57px;font-size:13.5px;font-weight:normal;font-style:normal;color:#000;font-family:'Liberation Sans';transform:scaleX(0.9055);">35254</div>
<div class="a" style="left:26px;top:352px;width:160px;height:20px;background:#92d050"></div>
<div class="a" style="left:26px;top:371px;width:830px;height:1px;background:#000"></div>
<div class="a" style="left:186px;top:351px;width:1px;height:21px;background:#000"></div>
<div class="a" style="left:347px;top:351px;width:1px;height:21px;background:#000"></div>
<div class="a" style="left:539px;top:351px;width:1px;height:21px;background:#000"></div>
<div class="a" style="left:700px;top:351px;width:1px;height:21px;background:#000"></div>
<div class="t" style="left:28.20px;top:355.57px;font-size:13.5px;font-weight:normal;font-style:normal;color:#000;font-family:'Liberation Sans';transform:scaleX(0.9853);">Петров Ф. Л.</div>
<div class="t" style="left:253.35px;top:355.57px;font-size:13.5px;font-weight:normal;font-style:normal;color:#000;font-family:'Liberation Sans';transform:scaleX(0.9717);">муж.</div>
<div class="t" style="left:380.50px;top:355.57px;font-size:13.5px;font-weight:normal;font-style:normal;color:#000;font-family:'Liberation Sans';transform:scaleX(1.0062);">Основной персонал</div>
<div class="t" style="left:588.85px;top:355.57px;font-size:13.5px;font-weight:normal;font-style:normal;color:#000;font-family:'Liberation Sans';transform:scaleX(0.9278);">25.05.2016</div>
<div class="t" style="left:792.50px;top:355.57px;font-size:13.5px;font-weight:normal;font-style:normal;color:#000;font-family:'Liberation Sans';transform:scaleX(0.9303);">11456</div>
<div class="a" style="left:26px;top:372px;width:160px;height:20px;background:#92d050"></div>
<div class="a" style="left:26px;top:391px;width:830px;height:1px;background:#000"></div>
<div class="a" style="left:186px;top:371px;width:1px;height:21px;background:#000"></div>
<div class="a" style="left:347px;top:371px;width:1px;height:21px;background:#000"></div>
<div class="a" style="left:539px;top:371px;width:1px;height:21px;background:#000"></div>
<div class="a" style="left:700px;top:371px;width:1px;height:21px;background:#000"></div>
<div class="t" style="left:28.20px;top:375.57px;font-size:13.5px;font-weight:normal;font-style:normal;color:#000;font-family:'Liberation Sans';">Попова М. Д.</div>
<div class="t" style="left:253.30px;top:375.57px;font-size:13.5px;font-weight:normal;font-style:normal;color:#000;font-family:'Liberation Sans';transform:scaleX(1.0234);">жен.</div>
<div class="t" style="left:354.50px;top:375.57px;font-size:13.5px;font-weight:normal;font-style:normal;color:#000;font-family:'Liberation Sans';transform:scaleX(1.0158);">Вспомогательный персонал</div>
<div class="t" style="left:588.85px;top:375.57px;font-size:13.5px;font-weight:normal;font-style:normal;color:#000;font-family:'Liberation Sans';transform:scaleX(0.9278);">25.05.2016</div>
<div class="t" style="left:795.90px;top:375.57px;font-size:13.5px;font-weight:normal;font-style:normal;color:#000;font-family:'Liberation Sans';transform:scaleX(0.9053);">9564</div>
<div class="a" style="left:26px;top:392px;width:160px;height:20px;background:#92d050"></div>
<div class="a" style="left:26px;top:411px;width:830px;height:1px;background:#000"></div>
<div class="a" style="left:186px;top:391px;width:1px;height:21px;background:#000"></div>
<div class="a" style="left:347px;top:391px;width:1px;height:21px;background:#000"></div>
<div class="a" style="left:539px;top:391px;width:1px;height:21px;background:#000"></div>
<div class="a" style="left:700px;top:391px;width:1px;height:21px;background:#000"></div>
<div class="t" style="left:28.20px;top:395.57px;font-size:13.5px;font-weight:normal;font-style:normal;color:#000;font-family:'Liberation Sans';transform:scaleX(1.0066);">Николаев А. Д.</div>
<div class="t" style="left:253.35px;top:395.57px;font-size:13.5px;font-weight:normal;font-style:normal;color:#000;font-family:'Liberation Sans';transform:scaleX(0.9717);">муж.</div>
<div class="t" style="left:380.50px;top:395.57px;font-size:13.5px;font-weight:normal;font-style:normal;color:#000;font-family:'Liberation Sans';transform:scaleX(1.0062);">Основной персонал</div>
<div class="t" style="left:588.85px;top:395.57px;font-size:13.5px;font-weight:normal;font-style:normal;color:#000;font-family:'Liberation Sans';transform:scaleX(0.9278);">23.06.2016</div>
<div class="t" style="left:792.50px;top:395.57px;font-size:13.5px;font-weight:normal;font-style:normal;color:#000;font-family:'Liberation Sans';transform:scaleX(0.9055);">23754</div>
<div class="a" style="left:26px;top:412px;width:160px;height:20px;background:#92d050"></div>
<div class="a" style="left:26px;top:431px;width:830px;height:1px;background:#000"></div>
<div class="a" style="left:186px;top:411px;width:1px;height:21px;background:#000"></div>
<div class="a" style="left:347px;top:411px;width:1px;height:21px;background:#000"></div>
<div class="a" style="left:539px;top:411px;width:1px;height:21px;background:#000"></div>
<div class="a" style="left:700px;top:411px;width:1px;height:21px;background:#000"></div>
<div class="t" style="left:28.20px;top:415.57px;font-size:13.5px;font-weight:normal;font-style:normal;color:#000;font-family:'Liberation Sans';transform:scaleX(0.9512);">Сафронова В. М.</div>
<div class="t" style="left:253.30px;top:415.57px;font-size:13.5px;font-weight:normal;font-style:normal;color:#000;font-family:'Liberation Sans';transform:scaleX(1.0234);">жен.</div>
<div class="t" style="left:380.50px;top:415.57px;font-size:13.5px;font-weight:normal;font-style:normal;color:#000;font-family:'Liberation Sans';transform:scaleX(1.0062);">Основной персонал</div>
<div class="t" style="left:588.85px;top:415.57px;font-size:13.5px;font-weight:normal;font-style:normal;color:#000;font-family:'Liberation Sans';transform:scaleX(0.9278);">23.06.2016</div>
<div class="t" style="left:792.50px;top:415.57px;font-size:13.5px;font-weight:normal;font-style:normal;color:#000;font-family:'Liberation Sans';transform:scaleX(0.9055);">18546</div>
<div class="a" style="left:26px;top:432px;width:160px;height:10px;background:#92d050"></div>
<div class="a" style="left:186px;top:431px;width:1px;height:10px;background:#000"></div>
<div class="a" style="left:347px;top:431px;width:1px;height:10px;background:#000"></div>
<div class="a" style="left:539px;top:431px;width:1px;height:10px;background:#000"></div>
<div class="a" style="left:700px;top:431px;width:1px;height:10px;background:#000"></div>
<div class="a" style="left:185px;top:209px;width:3px;height:24px;background:#000"></div>
<div class="a" style="left:185px;top:209px;width:164px;height:2px;background:#0a3be6"></div>
<div class="a" style="left:185px;top:211px;width:164px;height:1px;background:#000"></div>
<div class="a" style="left:346px;top:209px;width:3px;height:19px;background:#000"></div>
<div class="a" style="left:346px;top:209px;width:3px;height:2px;background:#0a3be6"></div>
<div class="a" style="left:185px;top:230px;width:159px;height:3px;background:#000"></div>
<div class="a" style="left:344px;top:228px;width:7px;height:7px;background:#000;border:1px solid #fff"></div>
</div>
<div class="a" style="left:864px;top:167px;width:16px;height:436px;background:linear-gradient(90deg,#e6e9ed,#dde1e6)"></div>
<div class="a" style="left:865px;top:168px;width:14px;height:7px;background:#fff;border:1px solid #8e96a0"></div>
<div class="a" style="left:868px;top:171px;width:8px;height:1px;background:#6a7480"></div>
<svg style="left:867px;top:180px" width="10" height="6" viewBox="0 0 10 6"><path d="M0 5.5h10L5 0z" fill="#3e4a56"/></svg>
<div class="a" style="left:864px;top:192px;width:16px;height:147px;border:1px solid #9aa2ad;border-radius:2px;background:linear-gradient(90deg,#f4f6f8,#e9ecf0 50%,#dfe3e8)"></div>
<div class="a" style="left:868px;top:262px;width:8px;height:1px;background:#6a7480"></div>
<div class="a" style="left:868px;top:264px;width:8px;height:1px;background:#6a7480"></div>
<div class="a" style="left:868px;top:266px;width:8px;height:1px;background:#6a7480"></div>
<div class="a" style="left:868px;top:268px;width:8px;height:1px;background:#6a7480"></div>
<svg style="left:867px;top:591px" width="10" height="6" viewBox="0 0 10 6"><path d="M0 0h10L5 5.5z" fill="#3e4a56"/></svg>
<div class="a" style="left:8px;top:603px;width:872px;height:16px;background:linear-gradient(#dfe4ea,#e7eaee)"></div>
<div class="a" style="left:8px;top:618px;width:872px;height:1px;background:#b1b8c1"></div>
<svg style="left:14px;top:606px" width="8" height="9" viewBox="0 0 8 9"><rect x="0" y="0.5" width="1.5" height="8" fill="#4a5563"/><path d="M7 0.5v8L2 4.5z" fill="#4a5563"/></svg>
<svg style="left:29px;top:606px" width="6" height="9" viewBox="0 0 6 9"><path d="M5.5 0.5v8L0.5 4.5z" fill="#4a5563"/></svg>
<svg style="left:43px;top:606px" width="6" height="9" viewBox="0 0 6 9"><path d="M0.5 0.5v8l5-4z" fill="#4a5563"/></svg>
<svg style="left:57px;top:606px" width="8" height="9" viewBox="0 0 8 9"><path d="M0.5 0.5v8l5-4z" fill="#4a5563"/><rect x="6" y="0.5" width="1.5" height="8" fill="#4a5563"/></svg>
<div class="a" style="left:70px;top:603px;width:1px;height:16px;background:#aab2bc"></div>
<svg style="left:77.4px;top:603px" width="67.8" height="16" viewBox="0 0 67.8 16"><defs><linearGradient id="tg" x1="0" y1="0" x2="0" y2="1"><stop offset="0" stop-color="#f3f5f8"/><stop offset="1" stop-color="#dde2e8"/></linearGradient></defs><path d="M0.5 15 L13.5 0.5 H67.3 V15z" fill="url(#tg)" stroke="#a3abb6" stroke-width="1"/><path d="M0.5 15l4-3.5v3.5z" fill="#fff"/></svg>
<svg style="left:130.2px;top:603px" width="70.3" height="16" viewBox="0 0 70.3 16"><defs><linearGradient id="tg" x1="0" y1="0" x2="0" y2="1"><stop offset="0" stop-color="#f3f5f8"/><stop offset="1" stop-color="#dde2e8"/></linearGradient></defs><path d="M0.5 15 L13.5 0.5 H69.8 V15z" fill="url(#tg)" stroke="#a3abb6" stroke-width="1"/><path d="M0.5 15l4-3.5v3.5z" fill="#fff"/></svg>
<svg style="left:185.5px;top:603px" width="75.7" height="16" viewBox="0 0 75.7 16"><defs><linearGradient id="tg" x1="0" y1="0" x2="0" y2="1"><stop offset="0" stop-color="#f3f5f8"/><stop offset="1" stop-color="#dde2e8"/></linearGradient></defs><path d="M0.5 15 L13.5 0.5 H75.2 V15z" fill="url(#tg)" stroke="#a3abb6" stroke-width="1"/><path d="M0.5 15l4-3.5v3.5z" fill="#fff"/></svg>
<svg style="left:246.2px;top:603px" width="62.8" height="16" viewBox="0 0 62.8 16"><defs><linearGradient id="tg" x1="0" y1="0" x2="0" y2="1"><stop offset="0" stop-color="#f3f5f8"/><stop offset="1" stop-color="#dde2e8"/></linearGradient></defs><path d="M0.5 15 L13.5 0.5 H62.3 V15z" fill="url(#tg)" stroke="#a3abb6" stroke-width="1"/><path d="M0.5 15l4-3.5v3.5z" fill="#fff"/></svg>
<div class="t" style="left:91.00px;top:605.57px;font-size:11.5px;font-weight:normal;font-style:normal;color:#3b4a63;font-family:'Liberation Sans';transform:scaleX(1.0831);">Лист8</div>
<div class="t" style="left:144.00px;top:605.57px;font-size:11.5px;font-weight:normal;font-style:normal;color:#3b4a63;font-family:'Liberation Sans';transform:scaleX(1.0831);">Лист9</div>
<div class="t" style="left:198.00px;top:605.57px;font-size:11.5px;font-weight:normal;font-style:normal;color:#3b4a63;font-family:'Liberation Sans';transform:scaleX(1.0667);">Лист10</div>
<div class="t" style="left:259.00px;top:605.57px;font-size:11.5px;font-weight:normal;font-style:normal;color:#3b4a63;font-family:'Liberation Sans';transform:scaleX(1.0667);">Лист11</div>
<div class="a" style="left:309px;top:602px;width:64px;height:17px;background:#fff"></div>
<svg style="left:308px;top:603px" width="1" height="16" viewBox="0 0 1 16"><path d="M0.5 0 V15.5" fill="none" stroke="#a3abb6"/></svg>
<div class="t" style="left:318.10px;top:605.57px;font-size:11.5px;font-weight:bold;font-style:normal;color:#222;font-family:'Liberation Sans';transform:scaleX(1.0577);">Лист1</div>
<svg style="left:359.0px;top:603px" width="68.0" height="16" viewBox="0 0 68.0 16"><defs><linearGradient id="tg" x1="0" y1="0" x2="0" y2="1"><stop offset="0" stop-color="#f3f5f8"/><stop offset="1" stop-color="#dde2e8"/></linearGradient></defs><path d="M0.5 15 L13.5 0.5 H67.5 V15z" fill="url(#tg)" stroke="#a3abb6" stroke-width="1"/><path d="M0.5 15l4-3.5v3.5z" fill="#fff"/></svg>
<svg style="left:412.0px;top:603px" width="68.8" height="16" viewBox="0 0 68.8 16"><defs><linearGradient id="tg" x1="0" y1="0" x2="0" y2="1"><stop offset="0" stop-color="#f3f5f8"/><stop offset="1" stop-color="#dde2e8"/></linearGradient></defs><path d="M0.5 15 L13.5 0.5 H68.3 V15z" fill="url(#tg)" stroke="#a3abb6" stroke-width="1"/><path d="M0.5 15l4-3.5v3.5z" fill="#fff"/></svg>
<svg style="left:465.8px;top:603px" width="46.5" height="16" viewBox="0 0 46.5 16"><defs><linearGradient id="tg" x1="0" y1="0" x2="0" y2="1"><stop offset="0" stop-color="#f3f5f8"/><stop offset="1" stop-color="#dde2e8"/></linearGradient></defs><path d="M0.5 15 L13.5 0.5 H46.0 V15z" fill="url(#tg)" stroke="#a3abb6" stroke-width="1"/><path d="M0.5 15l4-3.5v3.5z" fill="#fff"/></svg>
<div class="t" style="left:371.80px;top:605.57px;font-size:11.5px;font-weight:normal;font-style:normal;color:#3b4a63;font-family:'Liberation Sans';transform:scaleX(1.0545);">Лист2</div>
<div class="t" style="left:425.20px;top:605.57px;font-size:11.5px;font-weight:normal;font-style:normal;color:#3b4a63;font-family:'Liberation Sans';transform:scaleX(1.0449);">Лист3</div>
<div class="a" style="left:510px;top:603px;width:12px;height:15px;background:#dfe3e8;border-top:1px solid #a3abb6"></div>
<svg style="left:497px;top:603px" width="14" height="16" viewBox="0 0 14 16"><path d="M0.5 15 L13.5 0.5" stroke="#a3abb6"/></svg>
<svg style="left:479px;top:604px" width="17" height="14" viewBox="0 0 17 14"><defs><linearGradient id="ng" x1="0" y1="0" x2="1" y2="1"><stop offset="0" stop-color="#fdfdfe"/><stop offset="1" stop-color="#b8bec6"/></linearGradient></defs><path d="M3.5 3.5h10.5v7.5l-2 1.5H6.5l-1 1.5H4.5l-1-1.5z" fill="url(#ng)" stroke="#56606c" stroke-width="0.9"/><path d="M3.5 3.5v4" stroke="#6aa0e0"/><circle cx="3.8" cy="3.8" r="1.8" fill="#fff6a0"/><path d="M3.8 0v7.6M0 3.8h7.6M1.2 1.2l5.2 5.2M6.4 1.2L1.2 6.4" stroke="#f5961a" stroke-width="1"/><circle cx="3.8" cy="3.8" r="1.5" fill="#fff8c0"/></svg>
<div class="a" style="left:522px;top:605px;width:8px;height:13px;background:#fff;border:1px solid #8e96a0"></div>
<div class="a" style="left:525px;top:608px;width:1px;height:7px;background:#6a7480"></div>
<svg style="left:534px;top:607px" width="7" height="9" viewBox="0 0 7 9"><path d="M6 0.5v8L0.5 4.5z" fill="#3e4a56"/></svg>
<div class="a" style="left:547px;top:603px;width:218px;height:15px;border:1px solid #a6aeb8;border-radius:2px;background:linear-gradient(#f4f6f8,#e7eaee 55%,#dde1e6)"></div>
<div class="a" style="left:653px;top:607px;width:1px;height:8px;background:#6a7480"></div>
<div class="a" style="left:655px;top:607px;width:1px;height:8px;background:#6a7480"></div>
<div class="a" style="left:657px;top:607px;width:1px;height:8px;background:#6a7480"></div>
<div class="a" style="left:659px;top:607px;width:1px;height:8px;background:#6a7480"></div>
<svg style="left:845px;top:606px" width="7" height="10" viewBox="0 0 7 10"><path d="M0.5 0.5v9L6 5z" fill="#3e4a56"/></svg>
<div class="a" style="left:856px;top:604px;width:8px;height:14px;background:#fff;border:1px solid #8e96a0"></div>
<div class="a" style="left:859px;top:607px;width:1px;height:8px;background:#6a7480"></div>
<div class="a" style="left:864px;top:603px;width:16px;height:15px;background:#e3e7eb"></div>
<div class="a" style="left:8px;top:619px;width:872px;height:23px;background:linear-gradient(#f1f3f6,#e4e7eb 50%,#cdd1d7);border-top:1px solid #fff;border-bottom:1px solid #6a737e"></div>
<div class="t" style="left:16.00px;top:624.67px;font-size:11.5px;font-weight:normal;font-style:normal;color:#3b4a63;font-family:'Liberation Sans';transform:scaleX(1.0136);">Готово</div>
<div class="a" style="left:62px;top:621px;width:1px;height:18px;background:#b4bac2"></div>
<div class="a" style="left:63px;top:621px;width:1px;height:18px;background:#fafbfc"></div>
<svg style="left:72px;top:622px" width="15" height="14" viewBox="0 0 15 14"><rect x="1.5" y="1.5" width="13" height="12" fill="#fff" stroke="#4a6a9a"/><rect x="2" y="2" width="12" height="2.5" fill="#6a9ae0"/><path d="M2 7.5h12M2 10.5h12M6 5v8M10 5v8" stroke="#9ab4d8" stroke-width="0.8"/><path d="M3 6.5h2M7 6.5h2M11 6.5h2M3 9.5h2M7 9.5h2M11 9.5h2M3 12h2M7 12h2M11 12h2" stroke="#4a7ac8" stroke-width="1"/><circle cx="3.2" cy="3.2" r="2.8" fill="#e8642a" stroke="#b84a1a" stroke-width="0.5"/></svg>
<div class="a" style="left:97px;top:621px;width:1px;height:18px;background:#b4bac2"></div>
<div class="a" style="left:98px;top:621px;width:1px;height:18px;background:#fafbfc"></div>
<div class="a" style="left:628px;top:621px;width:19px;height:18px;background:linear-gradient(#fde9a6,#f9d26a);border:1px solid #e0a440;border-radius:2px"></div>
<svg style="left:631px;top:624px" width="13" height="11" viewBox="0 0 13 11"><rect x="0.5" y="0.5" width="12" height="10" fill="#fff" stroke="#3e4a56"/><path d="M0.5 3.5h12M0.5 6.5h12M4.5 0.5v10M8.5 0.5v10" stroke="#3e4a56" stroke-width="0.9"/></svg>
<svg style="left:649px;top:623px" width="13" height="14" viewBox="0 0 13 14"><rect x="0.5" y="0.5" width="12" height="12" fill="#e8ebef" stroke="#56606c"/><rect x="3" y="3" width="7" height="7" fill="#fff" stroke="#56606c" stroke-width="0.9"/></svg>
<svg style="left:668px;top:623px" width="14" height="14" viewBox="0 0 14 14"><rect x="0.5" y="0.5" width="13" height="12" fill="#e8ebef" stroke="#56606c"/><rect x="2.5" y="0.5" width="4" height="8" fill="#fff" stroke="#56606c" stroke-width="0.9"/><rect x="7.5" y="0.5" width="4" height="4" fill="#fff" stroke="#56606c" stroke-width="0.9"/></svg>
<div class="t" style="left:694.00px;top:625.27px;font-size:11.5px;font-weight:normal;font-style:normal;color:#3b4a63;font-family:'Liberation Sans';transform:scaleX(0.9007);">100%</div>
<svg style="left:728px;top:622px" width="17" height="17" viewBox="0 0 17 17"><circle cx="8.5" cy="8.5" r="7.8" fill="#f6f7f9" stroke="#56606c" stroke-width="1.1"/><path d="M4.5 8.5h8" stroke="#3e4a56" stroke-width="2"/></svg>
<div class="a" style="left:745px;top:629px;width:100px;height:1px;background:#8e96a0"></div>
<div class="a" style="left:745px;top:630px;width:100px;height:1px;background:#fff"></div>
<svg style="left:789px;top:623px" width="12" height="13" viewBox="0 0 12 13"><path d="M0.5 0.5h11v7l-5.5 5-5.5-5z" fill="#f3f5f7" stroke="#6a7480"/></svg>
<svg style="left:845px;top:622px" width="17" height="17" viewBox="0 0 17 17"><circle cx="8.5" cy="8.5" r="7.8" fill="#f6f7f9" stroke="#56606c" stroke-width="1.1"/><path d="M4.5 8.5h8M8.5 4.5v8" stroke="#3e4a56" stroke-width="2"/></svg>
<svg style="left:869px;top:629px" width="10" height="10" viewBox="0 0 10 10"><g fill="#a6adb6"><rect x="7" y="0" width="2" height="2"/><rect x="4" y="3" width="2" height="2"/><rect x="7" y="3" width="2" height="2"/><rect x="1" y="6" width="2" height="2"/><rect x="4" y="6" width="2" height="2"/><rect x="7" y="6" width="2" height="2"/></g></svg>
</body></html>
